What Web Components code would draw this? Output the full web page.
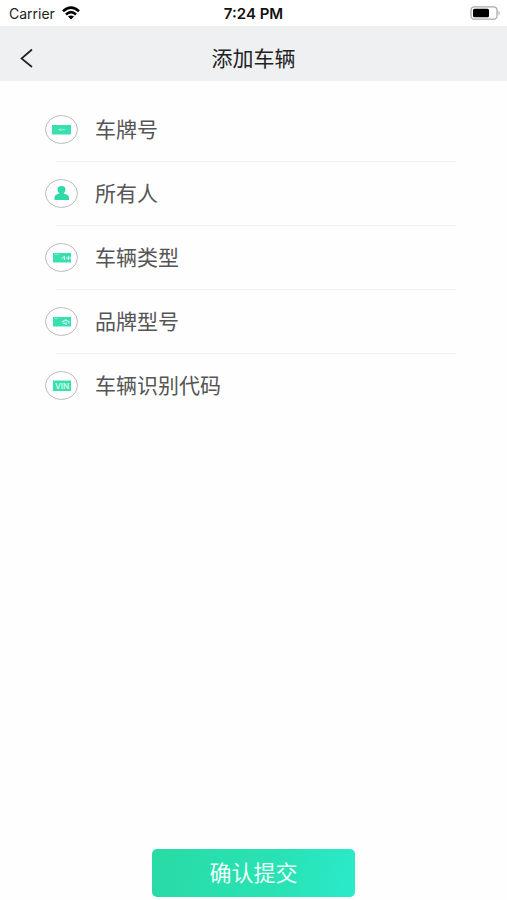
<!DOCTYPE html>
<html lang="zh-CN">
<head>
<meta charset="utf-8">
<meta name="viewport" content="width=device-width, initial-scale=1">
<title>添加车辆</title>
<style>
html, body { margin: 0; height: 100%; }
body { background: #fefefe; font-family: "Liberation Sans", "Noto Sans CJK SC", sans-serif; }
</style>
</head>
<body>
<vehicle-page>
  <status-bar slot="top" carrier="Carrier" time="7:24 PM"></status-bar>
  <nav-bar slot="top">添加车辆</nav-bar>
  <form-row icon="plate">车牌号</form-row>
  <form-row icon="person">所有人</form-row>
  <form-row icon="type">车辆类型</form-row>
  <form-row icon="model">品牌型号</form-row>
  <form-row icon="vin">车辆识别代码</form-row>
  <submit-button slot="bottom">确认提交</submit-button>
</vehicle-page>
<script>
class Base extends HTMLElement {
  connectedCallback() {
    if (!this.shadowRoot) this.attachShadow({ mode: "open" }).innerHTML = this.render();
  }
}

customElements.define("vehicle-page", class extends Base {
  render() {
    return `<style>
      :host { display: flex; flex-direction: column; min-height: 100vh; }
      form { flex: 1; display: flex; flex-direction: column; }
      .rows { flex: 1; padding: 17px 51px 24px 45px; }
      footer { display: flex; justify-content: center; padding-bottom: 3px; }
    </style>
    <slot name="top"></slot>
    <form><div class="rows"><slot></slot></div>
    <footer><slot name="bottom"></slot></footer></form>`;
  }
});

customElements.define("status-bar", class extends Base {
  render() {
    return `<style>
      :host { display: grid; grid-template-columns: 1fr auto 1fr; align-items: center; height: 26px;
        background: #fff; color: #222; font: 14px/26px Inter, sans-serif; }
      .left { display: flex; align-items: center; gap: 7px; padding-left: 9px; }
      .left span, .time { padding-top: 2px; line-height: 24px; }
      .time { font-size: 15px; font-weight: 600; color: #111; }
      .battery { justify-self: end; margin-right: 6px; }
      svg { display: block; }
    </style>
    <span class="left"><span>${this.getAttribute("carrier")}</span>
      <svg width="18" height="14" viewBox="0 0 18 14" fill="none" stroke="#000" stroke-width="2.6">
        <path d="M1 5.2Q9-2 17 5.2M4 8.4Q9 4 14 8.4"/><path d="M9 13.6 6 10.6Q9 8.2 12 10.6Z" fill="#000" stroke="none"/>
      </svg></span>
    <span class="time">${this.getAttribute("time")}</span>
    <svg class="battery" width="31" height="14" viewBox="0 0 31 14">
      <rect x="1" y=".8" width="26" height="12.4" rx="3.5" fill="#fff" stroke="#aaa" stroke-width="1.3"/>
      <rect x="3" y="2.8" width="16" height="8.4" rx="1.5" fill="#000"/>
      <path d="M28.5 4.5Q31 7 28.5 9.5Z" fill="#aaa"/>
    </svg>`;
  }
});

customElements.define("nav-bar", class extends Base {
  render() {
    return `<style>
      :host { display: grid; grid-template-columns: 1fr auto 1fr; align-items: center; height: 55px;
        padding: 0 16px; background: #eef0f2; color: #222; }
      button { justify-self: start; display: flex; padding: 8px 4px 0; border: 0; background: none; }
      h1 { margin: 0; padding-top: 7px; font: 400 21px/24px "Noto Sans CJK SC", sans-serif; }
    </style>
    <button type="button" aria-label="返回"><svg width="13" height="20" viewBox="0 0 13 20" fill="none" stroke="#222" stroke-width="1.7"><path d="M12 1.5 1.5 10.5 12 19"/></svg></button>
    <h1><slot></slot></h1>`;
  }
});

const MINT = "#38dfb0";
const ICONS = {
  plate: `<rect x="7" y="10" width="19" height="9.5" fill="${MINT}"/><path d="M13.5 14.7h1.5M16 13.5v2.5M17.7 14.7h2" stroke="#a9f1dc" stroke-width="1.2"/>`,
  person: `<path d="M16.500 7c2.700 0 4 1.400 4 3.400 0 1.500-.7 2.800-1.700 3.600v.8c3.200.5 5.200 1.500 5.200 3.500v2.700H9.500v-2.700c0-2 1.800-3 4.700-3.500V14c-1-.8-1.700-2.100-1.700-3.600 0-2 1.300-3.400 4-3.400Z" fill="#2ddba9"/>`,
  type: `<rect x="8" y="10" width="18" height="9.5" fill="${MINT}"/><path d="M9 11.5h5" stroke="#8eeed2" stroke-width=".7"/><path d="M16.500 15h1.500M19.500 13v4M23.500 13v4M18.500 13.300l1.500 3.500M21 15h2M25 14v2" stroke="#d0f8ec" stroke-width="1.100"/>`,
  model: `<rect x="8" y="10" width="18" height="9.5" fill="${MINT}"/><path d="M9 11.5h4" stroke="#8eeed2" stroke-width=".7"/><path d="M17 15 20.5 13 24.5 15M18 16.300h2M21 15v3M23 16h1.500" fill="none" stroke="#d0f8ec" stroke-width="1.200"/>`,
  vin: `<rect x="8" y="9.5" width="18" height="10.500" fill="${MINT}"/><text x="17" y="17.700" text-anchor="middle" font-family="Inter, sans-serif" font-size="8" font-weight="600" fill="#d8faef">VIN</text>`
};

customElements.define("form-row", class extends Base {
  render() {
    return `<style>
      :host { display: block; }
      .row { display: flex; align-items: center; height: 63px; }
      svg { flex: none; margin-right: 17px; }
      label { flex: none; padding-bottom: 3px; color: #555; font: 400 21px/30px "Noto Sans CJK SC", sans-serif; }
      input { flex: 1; min-width: 0; margin-left: 12px; padding: 0; border: 0; outline: 0; background: none; color: #555; font: 16px/30px "Noto Sans CJK SC", sans-serif; }
      .line { height: 1px; margin-left: 11px; background: #f3f3f3; }
      :host(:last-of-type) .line { visibility: hidden; }
    </style>
    <div class="row">
      <svg width="33" height="29" viewBox="0 0 33 29"><ellipse cx="16.5" cy="14.5" rx="16" ry="14" fill="#fff" stroke="#bbb"/>${ICONS[this.getAttribute("icon")]}</svg>
      <label for="field"><slot></slot></label><input id="field" type="text">
    </div><div class="line"></div>`;
  }
});

customElements.define("submit-button", class extends Base {
  render() {
    return `<style>
      :host { display: block; width: 40%; }
      button { display: block; width: 100%; height: 48px; padding: 0 0 4px; border: 0; border-radius: 5px;
        background: linear-gradient(100deg, #28dba5, #29e2b4 60%, #2aeaca); color: #effff9;
        font: 400 22px/44px "Noto Sans CJK SC", sans-serif; }
    </style>
    <button type="button"><slot></slot></button>`;
  }
});
</script>
</body>
</html>
